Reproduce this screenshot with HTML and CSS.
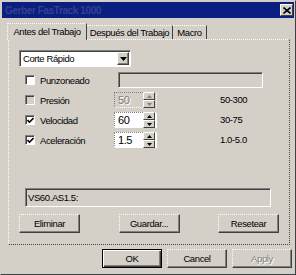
FILE: index.html
```html
<!DOCTYPE html>
<html lang="es">

<head>
    <meta charset="UTF-8" />
    <meta name="viewport" content="width=device-width, initial-scale=1.0" />
    <title>Gerber FasTrack 1000</title>
    <link rel="stylesheet" href="styles.css">
</head>

<body>
    <div class="window">
        <div class="caption">
            <span class="caption-text">Gerber FasTrack 1000</span>
            <span class="close">
                <svg width="8" height="7" viewBox="0 0 8 7"><path d="M0.5 0.5 L7.5 6.5 M7.5 0.5 L0.5 6.5" stroke="#000" stroke-width="1.6" /></svg>
            </span>
        </div>

        <div class="body">
            <div class="tabs">
                <div class="tab active">Antes del Trabajo</div>
                <div class="tab wide">Después del Trabajo</div>
                <div class="tab small">Macro</div>
            </div>

            <div class="panel">
                <div class="combo">
                    <span class="combo-text">Corte Rápido</span>
                    <span class="drop">
                        <svg width="7" height="4" viewBox="0 0 7 4"><polygon points="0,0 7,0 3.5,4" fill="#000" /></svg>
                    </span>
                </div>

                <div class="rows">
                    <div class="row">
                        <span class="check"></span>
                        <span class="label">Punzoneado</span>
                        <span class="field punch"></span>
                    </div>
                    <div class="row disabled">
                        <span class="check"></span>
                        <span class="label">Presión</span>
                        <span class="spin">
                            <span class="value">50</span>
                            <span class="arrows">
                                <span class="arrow"><svg width="5" height="3" viewBox="0 0 5 3"><polygon points="2.5,0 5,3 0,3" /></svg></span>
                                <span class="arrow"><svg width="5" height="3" viewBox="0 0 5 3"><polygon points="0,0 5,0 2.5,3" /></svg></span>
                            </span>
                        </span>
                        <span class="range">50-300</span>
                    </div>
                    <div class="row">
                        <span class="check on">
                            <svg width="7" height="7" viewBox="0 0 7 7"><path d="M0.5 3 L2.5 5.2 L6.5 1" fill="none" stroke="#000" stroke-width="1.6" /></svg>
                        </span>
                        <span class="label">Velocidad</span>
                        <span class="spin">
                            <span class="value">60</span>
                            <span class="arrows">
                                <span class="arrow"><svg width="5" height="3" viewBox="0 0 5 3"><polygon points="2.5,0 5,3 0,3" /></svg></span>
                                <span class="arrow"><svg width="5" height="3" viewBox="0 0 5 3"><polygon points="0,0 5,0 2.5,3" /></svg></span>
                            </span>
                        </span>
                        <span class="range">30-75</span>
                    </div>
                    <div class="row">
                        <span class="check on">
                            <svg width="7" height="7" viewBox="0 0 7 7"><path d="M0.5 3 L2.5 5.2 L6.5 1" fill="none" stroke="#000" stroke-width="1.6" /></svg>
                        </span>
                        <span class="label">Aceleración</span>
                        <span class="spin">
                            <span class="value">1.5</span>
                            <span class="arrows">
                                <span class="arrow"><svg width="5" height="3" viewBox="0 0 5 3"><polygon points="2.5,0 5,3 0,3" /></svg></span>
                                <span class="arrow"><svg width="5" height="3" viewBox="0 0 5 3"><polygon points="0,0 5,0 2.5,3" /></svg></span>
                            </span>
                        </span>
                        <span class="range">1.0-5.0</span>
                    </div>
                </div>

                <div class="field code">VS60.AS1.5:</div>

                <div class="actions">
                    <button class="btn">Eliminar</button>
                    <button class="btn">Guardar...</button>
                    <button class="btn">Resetear</button>
                </div>
            </div>

            <div class="footer">
                <button class="btn default">OK</button>
                <button class="btn">Cancel</button>
                <button class="btn" disabled>Apply</button>
            </div>
        </div>
    </div>
</body>

</html>
```

FILE: styles.css
```css
body {
    margin: 0;
    background: #d4d0c8;
    font-family: 'Liberation Sans', Arial, sans-serif;
    font-size: 9.5px;
    color: #000;
}

.window {
    width: 296px;
    height: 275px;
    box-sizing: border-box;
    padding: 1px;
    letter-spacing: -0.4px;
    border: 1px solid;
    border-color: #d4d0c8 #404040 #404040 #d4d0c8;
}

.caption {
    height: 16px;
    display: flex;
    align-items: center;
    justify-content: space-between;
    padding: 0 1px 0 3px;
    background-color: #0b1f80;
}

.caption-text {
    font-size: 10px;
    font-weight: bold;
    color: #33418e;
}

.close {
    width: 13px;
    height: 12px;
    box-sizing: border-box;
    display: flex;
    align-items: center;
    justify-content: center;
    background: #d4d0c8;
    border: 1px solid;
    border-color: #fff #404040 #404040 #fff;
}

.body {
    padding: 5px 0 0 6px;
}

.tabs {
    display: flex;
    align-items: flex-end;
    height: 16px;
    margin-left: -1px;
}

.tab {
    height: 14px;
    box-sizing: border-box;
    display: flex;
    align-items: center;
    justify-content: center;
    border-top: 1px dotted #fff;
    border-right: 1px solid #404040;
    white-space: nowrap;
}

.tab.active {
    width: 80px;
    height: 17px;
    margin-bottom: -1px;
    padding-bottom: 2px;
    border-left: 1px dotted #fff;
    background: #d4d0c8;
    position: relative;
    z-index: 1;
}

.tab.wide {
    width: 86px;
}

.tab.small {
    width: 34px;
}

.panel {
    width: 282px;
    height: 206px;
    box-sizing: border-box;
    padding: 10px 0 0 10px;
    border-style: dotted;
    border-width: 1px;
    border-color: #fff #404040 #404040 #fff;
}

.combo {
    width: 112px;
    height: 17px;
    box-sizing: border-box;
    display: flex;
    align-items: center;
    justify-content: space-between;
    padding: 0 1px 0 3px;
    background: #fff;
    border: 1px solid;
    border-color: #808080 #fff #fff #808080;
    box-shadow: inset 1px 1px #404040;
}

.drop {
    width: 12px;
    height: 13px;
    box-sizing: border-box;
    display: flex;
    align-items: center;
    justify-content: center;
    background: #d4d0c8;
    border: 1px solid;
    border-color: #fff #404040 #404040 #fff;
    box-shadow: inset -1px -1px #808080;
}

.rows {
    display: flex;
    flex-direction: column;
    gap: 4px;
    margin: 5px 0 0 6px;
}

.row {
    display: flex;
    align-items: center;
    height: 16px;
}

.check {
    width: 10px;
    height: 10px;
    box-sizing: border-box;
    display: flex;
    align-items: center;
    justify-content: center;
    background: #fff;
    border: 1px solid;
    border-color: #808080 #fff #fff #808080;
    box-shadow: inset 1px 1px #404040;
}

.label {
    width: 74px;
    margin-left: 5px;
}

.field {
    box-sizing: border-box;
    background: #fff;
    border: 1px solid;
    border-color: #808080 #fff #fff #808080;
    box-shadow: inset 1px 1px #404040;
}

.field.punch {
    width: 145px;
    height: 16px;
    margin-left: 4px;
    background: #d4d0c8;
}

.spin {
    width: 43px;
    height: 16px;
    box-sizing: border-box;
    display: flex;
    align-items: center;
    justify-content: space-between;
    padding: 0 1px 0 3px;
    background: #fff;
    border: 1px dotted #808080;
    border-right-color: #fff;
    border-bottom-color: #fff;
    font-size: 11px;
}

.arrows {
    display: flex;
    flex-direction: column;
    width: 12px;
}

.arrow {
    height: 6px;
    display: flex;
    align-items: center;
    justify-content: center;
    background: #d4d0c8;
    border: 1px solid;
    border-color: #fff #404040 #404040 #fff;
}

.range {
    margin-left: 63px;
    margin-top: -2px;
}

.disabled .check,
.disabled .spin {
    background: #d4d0c8;
}

.disabled .value {
    color: #808080;
    text-shadow: 1px 1px #fff;
}

.disabled .arrow svg {
    fill: #808080;
}

.field.code {
    width: 246px;
    height: 19px;
    margin: 40px 0 0 6px;
    padding: 3px 0 0 2px;
    background: #d4d0c8;
}

.actions {
    width: 260px;
    display: flex;
    justify-content: space-between;
    margin-top: 7px;
}

.btn {
    width: 61px;
    height: 19px;
    padding: 0;
    font: inherit;
    letter-spacing: inherit;
    color: #000;
    background: #d4d0c8;
    border-style: dotted solid solid dotted;
    border-width: 1px;
    border-color: #fff #404040 #404040 #fff;
    box-shadow: inset -1px -1px #808080;
}

.btn:disabled {
    color: #808080;
    text-shadow: 1px 1px #fff;
}

.btn.default {
    border: 1px solid #000;
    box-shadow: inset 1px 1px #fff, inset -1px -1px #404040, inset -2px -2px #808080;
}

.footer {
    width: 284px;
    display: flex;
    justify-content: flex-end;
    gap: 5px;
    margin-top: 4px;
}

.footer .btn {
    width: 60px;
}
```
